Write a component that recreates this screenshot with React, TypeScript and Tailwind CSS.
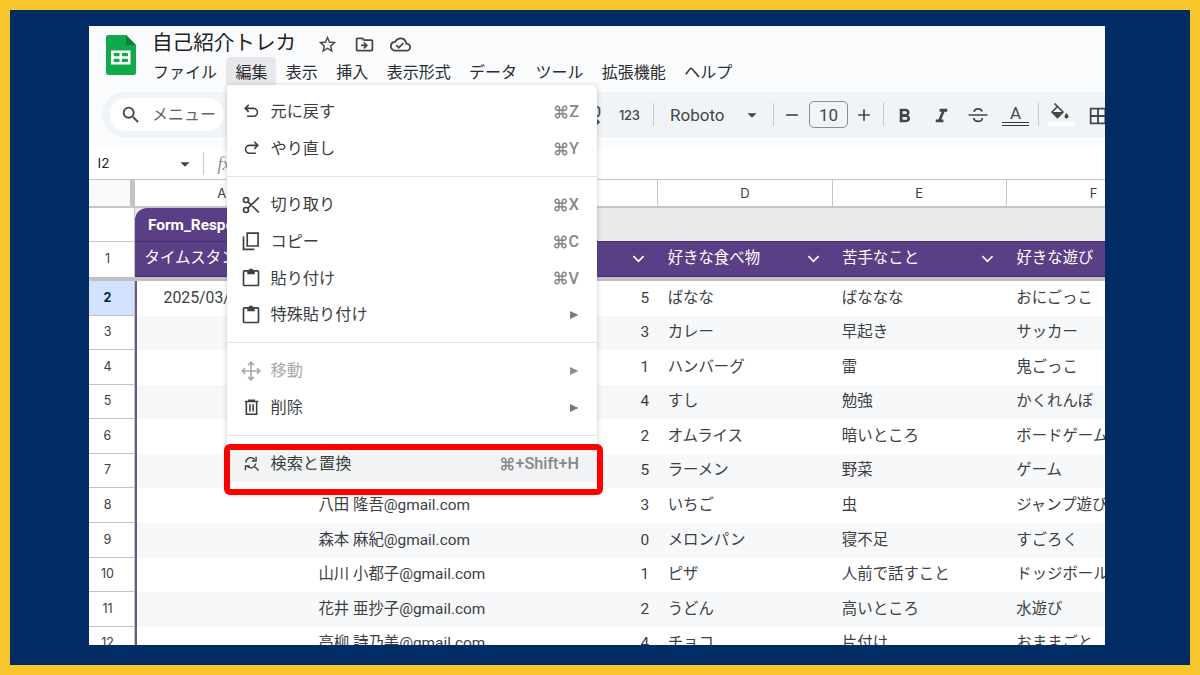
import React from 'react';
import { clsx } from 'clsx';
import {
  MdAdd,
  MdArrowDropDown,
  MdBorderAll,
  MdFormatBold,
  MdFormatItalic,
  MdOutlineCloudDone,
  MdOutlineDriveFileMove,
  MdRemove,
  MdSearch,
  MdStarBorder,
} from 'react-icons/md';

const menuBar = ['ファイル', '編集', '表示', '挿入', '表示形式', 'データ', 'ツール', '拡張機能', 'ヘルプ'];

const rows = [
  { n: 2, date: '2025/03/01', mail: '', score: 5, food: 'ばなな', weak: 'ばななな', play: 'おにごっこ' },
  { n: 3, mail: '', score: 3, food: 'カレー', weak: '早起き', play: 'サッカー' },
  { n: 4, mail: '', score: 1, food: 'ハンバーグ', weak: '雷', play: '鬼ごっこ' },
  { n: 5, mail: '', score: 4, food: 'すし', weak: '勉強', play: 'かくれんぼ' },
  { n: 6, mail: '', score: 2, food: 'オムライス', weak: '暗いところ', play: 'ボードゲーム' },
  { n: 7, mail: '', score: 5, food: 'ラーメン', weak: '野菜', play: 'ゲーム' },
  { n: 8, mail: '八田 隆吾@gmail.com', score: 3, food: 'いちご', weak: '虫', play: 'ジャンプ遊び' },
  { n: 9, mail: '森本 麻紀@gmail.com', score: 0, food: 'メロンパン', weak: '寝不足', play: 'すごろく' },
  { n: 10, mail: '山川 小都子@gmail.com', score: 1, food: 'ピザ', weak: '人前で話すこと', play: 'ドッジボール' },
  { n: 11, mail: '花井 亜抄子@gmail.com', score: 2, food: 'うどん', weak: '高いところ', play: '水遊び' },
  { n: 12, mail: '高柳 詩乃美@gmail.com', score: 4, food: 'チョコ', weak: '片付け', play: 'おままごと' },
];

// Menu icons, all on a 24px grid
function Glyph({ d, size = 20 }: { d: string; size?: number }) {
  return (
    <svg viewBox="0 0 24 24" width={size} height={size} fill="none" stroke="currentColor" strokeWidth="2" className="shrink-0">
      <path d={d} />
    </svg>
  );
}

const UNDO = 'M8.500 3.500 4 8l4.500 4.500M4.500 8h10a5 5 0 0 1 0 10H6.500';
const REDO = 'M15.500 3.500 20 8l-4.500 4.500M19.500 8h-10a5 5 0 0 0 0 10h8';
const COPY = 'M7.500 2.500h13v15.500h-13zM3 6.500V22h13';
const MOVE = 'M12 1.800v20.400M1.800 12h20.400M8.500 5 12 1.500 15.500 5M8.500 19l3.500 3.500 3.500-3.500M5 8.500 1.500 12 5 15.500M19 8.500l3.500 3.500-3.500 3.500';
const TRASH = 'M3.500 4.500h17M8.500 4V2.800h7V4M5.500 5v15.500h13V5M10 8v9M14 8v9';
const FIND = 'M4 10.500a7 7 0 0 1 12.500-4M18.500 2.500v6h-6M18 12a7 7 0 0 1-12 4M3.500 21.500v-6h6M15.500 15.500l6.500 6.500';
const CUT = 'M8.300 8.300 21.500 21M8.300 15.700 21.500 3M9 6a3 3 0 1 1-6 0 3 3 0 0 1 6 0zM9 18a3 3 0 1 1-6 0 3 3 0 0 1 6 0z';

function PasteIcon() {
  return (
    <svg viewBox="0 0 24 24" width="20" height="20" fill="none" stroke="currentColor" strokeWidth="2" className="shrink-0">
      <rect x="3" y="3.500" width="18" height="17.500" rx="1" />
      <path d="M7.500 4h9v3.500h-9z" fill="currentColor" stroke="none" />
      <circle cx="12" cy="3.200" r="2" strokeWidth="1.500" />
    </svg>
  );
}

function MenuItem({
  icon,
  label,
  shortcut,
  arrow,
  disabled,
  active,
}: {
  icon: React.ReactNode;
  label: string;
  shortcut?: string;
  arrow?: boolean;
  disabled?: boolean;
  active?: boolean;
}) {
  return (
    <div
      className={clsx(
        'flex h-[36.800px] items-center pr-[18px] pl-[13.500px]',
        active && 'bg-[#f1f3f4]',
        disabled ? 'text-[#a8abae]' : 'text-[#3c3f42]'
      )}
    >
      <span className="flex w-[21px] justify-center">{icon}</span>
      <span className="ml-[9px] flex-1 pt-px text-[16.200px] leading-none">{label}</span>
      {shortcut && (
        <span className="flex items-center pt-px text-[16.200px] font-medium leading-none text-[#85888b]">
          <span className="font-['Inter','DejaVu_Sans',sans-serif] text-[16.500px] font-semibold">⌘</span>
          {shortcut}
        </span>
      )}
      {arrow && (
        <svg viewBox="0 0 10 10" width="10" height="10" className={disabled ? 'text-[#8d9194]' : 'text-[#777b7e]'}>
          <path d="M1 1v8l8.500-4z" fill="currentColor" />
        </svg>
      )}
    </div>
  );
}

function Separator() {
  return <div className="my-[9px] h-px bg-[#e0e2e5]" />;
}

function EditMenu() {
  return (
    <div className="absolute top-[59px] left-[138px] z-10 h-[408px] w-[370px] rounded-tr-[5px] bg-white pt-[8.600px] shadow-[0_1px_5px_rgba(60,64,67,0.3)]">
      <MenuItem icon={<Glyph d={UNDO} size={19} />} label="元に戻す" shortcut="Z" />
      <MenuItem icon={<Glyph d={REDO} size={19} />} label="やり直し" shortcut="Y" />
      <Separator />
      <MenuItem icon={<Glyph d={CUT} />} label="切り取り" shortcut="X" />
      <MenuItem icon={<Glyph d={COPY} />} label="コピー" shortcut="C" />
      <MenuItem icon={<PasteIcon />} label="貼り付け" shortcut="V" />
      <MenuItem icon={<PasteIcon />} label="特殊貼り付け" arrow />
      <Separator />
      <MenuItem icon={<Glyph d={MOVE} />} label="移動" arrow disabled />
      <MenuItem icon={<Glyph d={TRASH} size={19} />} label="削除" arrow />
      <Separator />
      <MenuItem icon={<Glyph d={FIND} size={17} />} label="検索と置換" shortcut="+Shift+H" active />
    </div>
  );
}

function Header() {
  return (
    <div className="flex h-[66px] bg-[#f9fbfd]">
      <svg viewBox="0 0 30 40" width="30" height="40" className="mt-[9px] ml-[17px]">
        <path d="M2.500 0H20l10 10v27.500a2.500 2.500 0 0 1-2.500 2.500h-25A2.500 2.500 0 0 1 0 37.500v-35A2.500 2.500 0 0 1 2.500 0z" fill="#10a94b" />
        <path d="M20 0l10 10H20z" fill="#0c8038" />
        <path d="M5 15.500h19.500v14H5zM7.700 18v3.300h5.800V18zm8.200 0v3.300h6V18zM7.700 23.700V27h5.800v-3.300zm8.200 0V27h6v-3.300z" fill="#fff" fillRule="evenodd" />
      </svg>
      <div className="ml-2">
        <div className="flex h-[31px] items-center pt-[5px] pl-[8px] text-[#444746]">
          <span className="-mt-px text-[20.600px] leading-none text-[#1f1f1f]">自己紹介トレカ</span>
          <MdStarBorder size={21} className="ml-[20.500px]" />
          <MdOutlineDriveFileMove size={21} className="ml-[16px]" />
          <MdOutlineCloudDone size={21} className="ml-[15.500px]" />
        </div>
        <div className="flex gap-[0.400px] text-[16px] leading-none text-[#2a2c2e]">
          {menuBar.map((label) => (
            <span
              key={label}
              className={clsx(
                'flex h-[29px] items-center rounded-t-[4px] px-[9px] pt-[2px]',
                label === '編集' && 'bg-[#e6e8eb]'
              )}
            >
              {label}
            </span>
          ))}
        </div>
      </div>
    </div>
  );
}

function Divider({ className }: { className?: string }) {
  return <div className={clsx('h-[23px] w-px shrink-0 bg-[#c7cacd]', className)} />;
}

function Toolbar() {
  return (
    <div className="h-[56px] bg-[#f9fbfd] pl-[13px]">
      <div className="flex h-[45px] items-center rounded-l-full bg-[#f0f4f7] pl-2 text-[#444746]">
        <div className="flex h-[33px] w-[114px] shrink-0 items-center rounded-full bg-white pl-[10px]">
          <MdSearch size={22} />
          <span className="ml-[10px] text-[16px] leading-none text-[#5f6368]">メニュー</span>
        </div>
        {/* decimal places button, half under the open menu */}
        <div className="ml-[369px] flex w-[11px] shrink-0 flex-col text-[14px] font-medium leading-none">
          <span>0</span>
          <svg viewBox="0 0 12 6" width="12" height="6" className="-ml-1">
            <path d="M0 3h10M7.500.500 10 3 7.500 5.500" fill="none" stroke="currentColor" strokeWidth="1.500" />
          </svg>
        </div>
        <span className="ml-[15px] w-[22px] shrink-0 pt-px font-['Inter',sans-serif] text-[13px] font-medium leading-none tracking-[-0.300px]">
          123
        </span>
        <Divider className="ml-[12px]" />
        <span className="ml-[16px] w-[59px] shrink-0 pt-px text-[17px] leading-none">Roboto</span>
        <MdArrowDropDown size={22} className="ml-[12px] shrink-0" />
        <Divider className="ml-[10px]" />
        <MdRemove size={20} className="ml-[8px] shrink-0" />
        <div className="ml-[7px] flex h-[27px] w-[39px] shrink-0 items-center justify-center rounded-[5px] border border-[#8b8e90] pt-px text-[17px] leading-none">
          10
        </div>
        <MdAdd size={20} className="ml-[6px] shrink-0" />
        <Divider className="ml-[9px]" />
        <MdFormatBold size={23} className="mt-[3px] ml-[9px] shrink-0" />
        <MdFormatItalic size={23} className="mt-[3px] ml-[14px] shrink-0" />
        <svg viewBox="0 0 20 20" width="20" height="20" fill="none" stroke="currentColor" strokeWidth="1.700" className="mt-px ml-[15px] shrink-0">
          <path d="M.500 10h19M6 6.800c.400-2 2-3 4-3s3.600 1 4.200 2.700M5.600 13c.500 2.200 2.300 3.400 4.500 3.400s4-1.200 4.200-3.400" />
        </svg>
        <div className="mt-[2px] ml-[14px] flex w-[27px] shrink-0 flex-col items-center">
          <span className="text-[17px] leading-[16px]">A</span>
          <div className="mt-px h-[4.500px] w-full border-y-[1.500px] border-[#3a3540]" />
        </div>
        <Divider className="ml-[9px]" />
        <div className="ml-[9px] flex w-[27px] shrink-0 flex-col items-center">
          <svg viewBox="0 0 20 18" width="20" height="18" className="-ml-[3px]">
            <path d="M4.500.500 13 9 7.500 14.500 2 9l5.500-5.500" fill="none" stroke="currentColor" strokeWidth="1.600" />
            <path d="M2 9h11l-5.500 5.500z" fill="currentColor" />
            <path d="M16.500 10s-2 2.300-2 3.600a2 2 0 0 0 4 0c0-1.300-2-3.600-2-3.600z" fill="currentColor" />
          </svg>
          <div className="mt-px h-1 w-full bg-white" />
        </div>
        <MdBorderAll size={22} className="mt-[2px] ml-[12px] shrink-0" />
      </div>
    </div>
  );
}

function FormulaBar() {
  return (
    <div className="flex h-[31px] items-center bg-white pl-[8.500px] text-[#202124]">
      <span className="w-[76px] font-['Inter',sans-serif] text-[13.500px] leading-none">I2</span>
      <MdArrowDropDown size={22} className="text-[#444746]" />
      <Divider className="ml-[7px] h-[19px]" />
      <span className="ml-[14px] font-['Liberation_Serif',serif] text-[18px] italic leading-none text-[#8b8e90]">fx</span>
    </div>
  );
}

function Sheet() {
  const cell = 'w-[174.400px] shrink-0';
  return (
    <div className="w-[1092px] text-[15.400px] leading-none text-[#3c4043]">
      {/* column letters */}
      <div className="flex h-[29px] border-t border-b-2 border-[#c4c7c9] text-[13px]">
        <div className="w-[46px] shrink-0 border-r-[5px] border-[#c0c2c4] bg-[#f8f9fa]" />
        {['A', 'B', 'C', 'D', 'E', 'F'].map((c) => (
          <div
            key={c}
            className={clsx(cell, "flex items-center justify-center border-r border-[#c4c7c9] pt-px font-['Inter',sans-serif]")}
          >
            {c}
          </div>
        ))}
      </div>

      {/* table name */}
      <div className="flex h-[33px] bg-[#e8eaec]">
        <div className="w-[46px] shrink-0 border-r border-[#c4c7c9] bg-white" />
        <div className="flex w-[200px] items-center rounded-tl-[12px] bg-[#5b3f86] pt-[3px] pl-[13px] font-bold text-white">
          Form_Responses
        </div>
      </div>

      {/* header row */}
      <div className="flex h-[36px]">
        <div className="flex w-[46px] shrink-0 items-center justify-center border-t border-r border-[#c4c7c9] pr-[8px] font-['Inter',sans-serif] text-[12.500px]">
          1
        </div>
        <div className="flex items-center border-y border-[#48306f] bg-[#5b3f86] text-white">
          {['タイムスタンプ', 'メールアドレス', 'スコア', '好きな食べ物', '苦手なこと', '好きな遊び'].map((h) => (
            <div key={h} className={clsx(cell, 'flex items-center justify-between pr-[13px] pl-[9.500px]')}>
              <span>{h}</span>
              <svg viewBox="0 0 14 8" width="13" height="8" fill="none" stroke="currentColor" strokeWidth="1.800">
                <path d="M1.500 1 7 6.500 12.500 1" />
              </svg>
            </div>
          ))}
        </div>
      </div>

      {/* frozen row bar */}
      <div className="h-1 bg-[#c3bfc4]" />

      {rows.map((row, i) => (
        <div key={row.n} className="flex h-[34.580px]">
          <div
            className={clsx(
              "flex w-[46px] shrink-0 items-center justify-center border-r border-b border-[#c0c3c6] pr-[8px] font-['Inter',sans-serif] text-[12.500px]",
              row.n === 2 ? 'bg-[#d3e3fd] font-bold text-[#041e49]' : 'bg-white'
            )}
          >
            {row.n}
          </div>
          <div className={clsx('flex items-center border-l-2 border-[#6d558f]', i % 2 ? 'bg-[#f6f8f9]' : 'bg-white')}>
            <div className="w-[171.400px] shrink-0 pl-[26.500px] text-[15.800px]">{row.date}</div>
            <div className={clsx(cell, 'pl-[10px] whitespace-nowrap')}>{row.mail}</div>
            <div className={clsx(cell, 'pr-[8px] text-right')}>{row.score}</div>
            <div className={clsx(cell, 'pl-[10.500px]')}>{row.food}</div>
            <div className={clsx(cell, 'pl-[10.300px]')}>{row.weak}</div>
            <div className={clsx(cell, 'pl-[10.300px]')}>{row.play}</div>
          </div>
        </div>
      ))}
    </div>
  );
}

export default function App() {
  return (
    <div className="h-[675px] w-[1200px] overflow-hidden border-[10px] border-[#f8c62c] bg-[#022c66] pt-[16px] pl-[79px] font-['Roboto','Noto_Sans_CJK_JP',sans-serif]">
      <div className="relative h-[619px] w-[1016px] overflow-hidden bg-white">
        <Header />
        <Toolbar />
        <FormulaBar />
        <Sheet />
        <EditMenu />
        {/* highlight around the find and replace entry */}
        <div className="absolute top-[417.500px] left-[135px] z-20 h-[51px] w-[379px] rounded-[6px] border-[6px] border-[#fe0000]" />
      </div>
    </div>
  );
}
